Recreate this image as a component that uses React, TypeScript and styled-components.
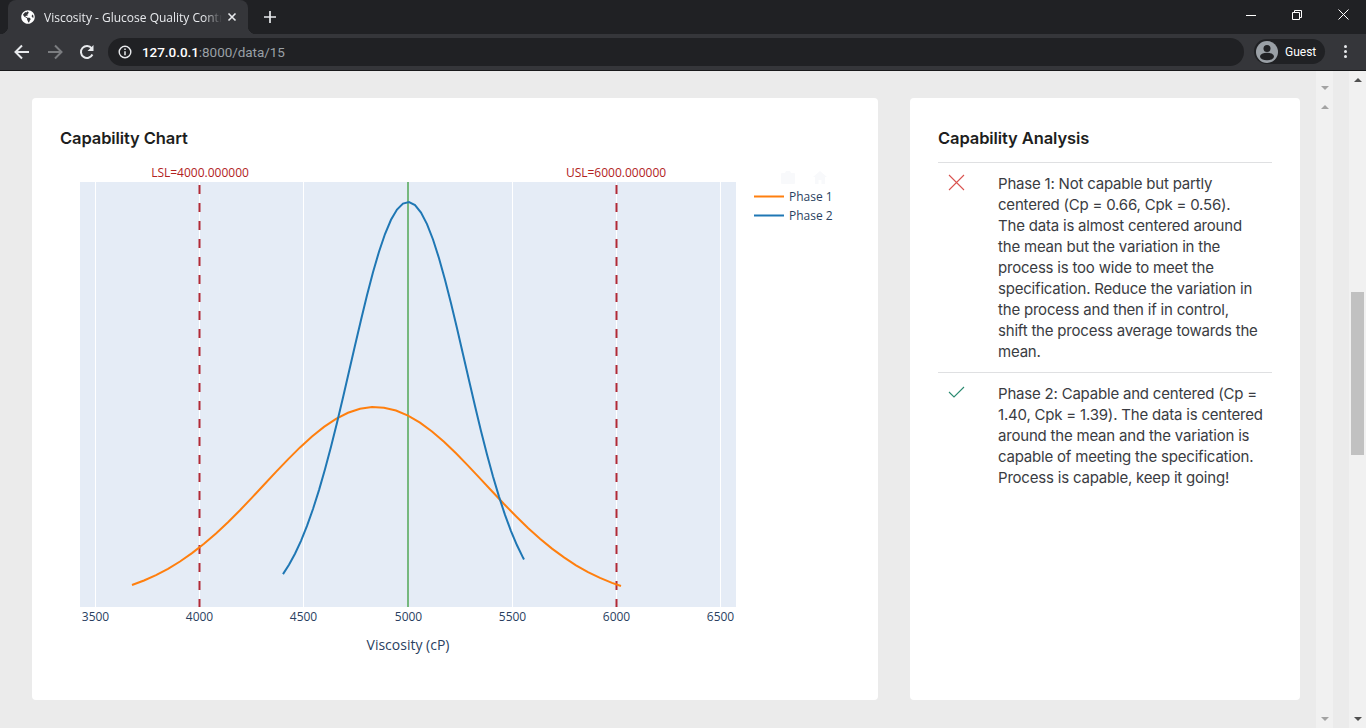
import React from "react";
import styled, { createGlobalStyle } from "styled-components";
import { FaGlobeAmericas } from "react-icons/fa";

const Global = createGlobalStyle`
  html, body { margin: 0; padding: 0; height: 100%; overflow: hidden; background: #ebebeb; }
  #root { height: 728px; }
  * { box-sizing: border-box; }
`;

const Page = styled.div`
  width: 1366px; height: 728px; display: flex; flex-direction: column; overflow: hidden;
  font-family: "Inter", "Liberation Sans", sans-serif;
`;
const TabBar = styled.div`
  height: 34px; background: #202124; display: flex; align-items: flex-end; padding-left: 8px; flex: none;
`;
const Tab = styled.div`
  position: relative; width: 240px; height: 34px; background: #35363a; border-radius: 8px 8px 0 0;
  display: flex; align-items: center; padding: 0 11px 0 13px; color: #fff;
  &::before, &::after { content: ""; position: absolute; bottom: 0; width: 8px; height: 8px; }
  &::before { left: -8px; background: radial-gradient(circle at 0 0, transparent 8px, #35363a 8.5px); }
  &::after { right: -8px; background: radial-gradient(circle at 100% 0, transparent 8px, #35363a 8.5px); }
`;
const TabTitle = styled.span`
  flex: 1; margin: 0 5px 0 9px; font: 12px "Open Sans", sans-serif; color: #e8eaed; white-space: nowrap; overflow: hidden;
  -webkit-mask-image: linear-gradient(90deg, #000 90%, transparent 100%);
  mask-image: linear-gradient(90deg, #000 90%, transparent 100%);
`;
const NewTab = styled.div`
  margin: 0 0 0 16px; height: 34px; display: flex; align-items: center; width: 16px;
`;
const WindowControls = styled.div`
  margin-left: auto; height: 34px; display: flex; align-self: flex-start;
`;
const WinButton = styled.div`
  width: 46px; height: 29px; display: flex; align-items: center; justify-content: center;
`;
const Toolbar = styled.div`
  height: 37px; flex: none; background: #35363a; border-bottom: 1px solid #18191b; display: flex; align-items: center;
  padding: 0 0 1px 0;
`;
const NavButton = styled.div`
  width: 32px; height: 28px; display: flex; align-items: center; justify-content: center; flex: none;
`;
const NavGroup = styled.div`
  display: flex; padding-left: 6px; gap: 0.5px; width: 108px; flex: none;
`;
const Omnibox = styled.div`
  width: 1136px; height: 28px; background: #202124; border-radius: 14px; display: flex; align-items: center;
  padding-left: 10px; flex: none;
`;
const Url = styled.div`
  margin-left: 10px; font: 13.5px "Roboto", sans-serif; color: #9aa0a6; letter-spacing: -0.05px;
`;
const Host = styled.span` color: #fff; font-weight: 500; `;
const Profile = styled.div`
  margin-left: 10px; width: 71px; height: 25px; background: #202124; border-radius: 13px; display: flex; align-items: center;
  padding-left: 1px; flex: none;
`;
const ProfileName = styled.span`
  margin-left: 6px; font: 12px "Roboto", sans-serif; color: #fff;
`;
const Kebab = styled.div`
  margin-left: 12px; display: flex; flex-direction: column; gap: 2px; width: 16px; align-items: center;
`;
const Dot = styled.i` width: 3px; height: 3px; border-radius: 50%; background: #e8eaed; display: block; `;
const Viewport = styled.div`
  flex: 1; display: flex; min-height: 0; background: #ebebeb;
`;
const Content = styled.main`
  width: 1316px; flex: none; padding: 27px 16px 0 32px; display: flex; gap: 32px; align-items: flex-start;
`;
const Card = styled.section<{ $w: number }>`
  width: ${(p) => p.$w}px; height: 602px; flex: none; background: #fff; border-radius: 4px; padding: 28px 28px 0;
`;
const Heading = styled.h2`
  margin: 0; font: 600 16.5px/24px "Inter", sans-serif; color: #1d1e20; letter-spacing: -0.1px;
`;
const ChartSvg = styled.svg`
  display: block; width: 790px; height: 500px; overflow: visible;
`;
const Tick = styled.text`
  font: 12px "Open Sans", sans-serif; fill: #2a3f5f; text-anchor: middle;
`;
const AxisTitle = styled.text`
  font: 14px "Open Sans", sans-serif; fill: #2a3f5f; text-anchor: middle;
`;
const Annot = styled.text`
  font: 12px "Open Sans", sans-serif; fill: #b22222; text-anchor: middle;
`;
const LegendText = styled.text`
  font: 12px "Open Sans", sans-serif; fill: #2a3f5f;
`;
const AnalysisList = styled.ul`
  list-style: none; margin: 12px 0 0; padding: 0;
`;
const AnalysisItem = styled.li`
  border-top: 1px solid #dfe0e2; padding: 10px 0; display: flex;
`;
const StatusIcon = styled.div`
  width: 60px; flex: none; padding: 1px 0 0 10px; height: 20px;
`;
const AnalysisText = styled.p`
  margin: 0; font: 400 15px/21px "Inter", sans-serif; color: #3a3c42; letter-spacing: -0.2px; flex: 1;
`;
const TextLine = styled.span`
  display: block; white-space: nowrap;
`;
const Rails = styled.div`
  flex: 1; display: flex; justify-content: space-between; position: relative;
`;
const Track = styled.div`
  width: 17px; height: 100%; background: #f1f1f1; position: relative;
`;
const Thumb = styled.div`
  position: absolute; left: 2px; right: 2px; top: 221px; height: 163px; background: #c1c1c1;
`;
const Arrow = styled.div<{ $up?: boolean; $top?: number; $bottom?: number; $c: string }>`
  position: absolute; left: 4.5px; width: 0; height: 0;
  border-left: 4px solid transparent; border-right: 4px solid transparent;
  ${(p) => (p.$up ? `border-bottom: 4px solid ${p.$c};` : `border-top: 4px solid ${p.$c};`)}
  ${(p) => (p.$top !== undefined ? `top: ${p.$top}px;` : "")}
  ${(p) => (p.$bottom !== undefined ? `bottom: ${p.$bottom}px;` : "")}
`;

const gauss = (c: number, s: number, h: number, b: number, x0: number, x1: number, step: number) => {
  const pts: string[] = [];
  const y = (x: number) => {
    const t = (x - c) / s;
    return (b - h * Math.exp(-t * t / 2)).toFixed(1);
  };
  for (let x = x0; x < x1; x += step) pts.push(`${x.toFixed(1)},${y(x)}`);
  pts.push(`${x1.toFixed(1)},${y(x1)}`);
  return pts.join(" ");
};

const ox = 60, oy = 150;
const ticks = [
  [95.5, "3500"], [199.5, "4000"], [303.5, "4500"], [408.5, "5000"], [512.5, "5500"], [616.5, "6000"], [720.5, "6500"],
] as const;

const phase1 = [
  "Phase 1: Not capable but partly",
  "centered (Cp = 0.66, Cpk = 0.56).",
  "The data is almost centered around",
  "the mean but the variation in the",
  "process is too wide to meet the",
  "specification. Reduce the variation in",
  "the process and then if in control,",
  "shift the process average towards the",
  "mean.",
];
const phase2 = [
  "Phase 2: Capable and centered (Cp =",
  "1.40, Cpk = 1.39). The data is centered",
  "around the mean and the variation is",
  "capable of meeting the specification.",
  "Process is capable, keep it going!",
];

export default function App() {
  return (
    <Page>
      <Global />
      <TabBar>
        <Tab>
          <FaGlobeAmericas size={14} color="#fff" />
          <TabTitle>Viscosity - Glucose Quality Control</TabTitle>
          <svg width="10" height="10" viewBox="0 0 10 10"><path d="M1.5 1.5l7 7M8.5 1.5l-7 7" stroke="#e8eaed" strokeWidth="1.6" /></svg>
        </Tab>
        <NewTab>
          <svg width="12" height="12" viewBox="0 0 12 12"><path d="M6 0v12M0 6h12" stroke="#e8eaed" strokeWidth="1.7" /></svg>
        </NewTab>
        <WindowControls>
          <WinButton><svg width="10" height="10" viewBox="0 0 10 10"><path d="M0 5.5h10" stroke="#fff" /></svg></WinButton>
          <WinButton><svg width="10" height="10" viewBox="0 0 10 10"><path d="M.5 2.5h7v7h-7zM2.5 2.5v-2h7v7h-2" fill="none" stroke="#fff" /></svg></WinButton>
          <WinButton><svg width="11" height="11" viewBox="0 0 11 11"><path d="M.5.5l10 10M10.5.5l-10 10" stroke="#fff" /></svg></WinButton>
        </WindowControls>
      </TabBar>
      <Toolbar>
        <NavGroup>
          <NavButton><svg width="16" height="16" viewBox="0 0 16 16"><path d="M15 8H2M8 1.500L1.500 8 8 14.500" fill="none" stroke="#e8eaed" strokeWidth="2" /></svg></NavButton>
          <NavButton><svg width="16" height="16" viewBox="0 0 16 16"><path d="M1 8h13M8 1.500L14.500 8 8 14.500" fill="none" stroke="#7b7d80" strokeWidth="2" /></svg></NavButton>
          <NavButton><svg width="16" height="16" viewBox="0 0 16 16"><path d="M13.400 10.500A6 6 0 1 1 12.700 4.300" fill="none" stroke="#e8eaed" strokeWidth="2" /><path d="M14.500 1v6h-6z" fill="#e8eaed" /></svg></NavButton>
        </NavGroup>
        <Omnibox>
          <svg width="14" height="14" viewBox="0 0 14 14"><circle cx="7" cy="7" r="5.800" fill="none" stroke="#e8eaed" strokeWidth="1.400" /><path d="M7 6.200v4M7 3.600v1.500" stroke="#e8eaed" strokeWidth="1.500" /></svg>
          <Url><Host>127.0.0.1</Host>:8000/data/15</Url>
        </Omnibox>
        <Profile>
          <svg width="24" height="24" viewBox="0 0 24 24"><circle cx="12" cy="12" r="11" fill="#9aa0a6" /><circle cx="12" cy="8.500" r="3.500" fill="#202124" /><ellipse cx="12" cy="16.500" rx="7" ry="3.800" fill="#202124" /></svg>
          <ProfileName>Guest</ProfileName>
        </Profile>
        <Kebab><Dot /><Dot /><Dot /></Kebab>
      </Toolbar>
      <Viewport>
        <Content>
          <Card $w={846}>
            <Heading>Capability Chart</Heading>
            <ChartSvg viewBox={`${ox} ${oy} 790 500`}>
              <rect x={80} y={182} width={656} height={425} fill="#e5ecf6" />
              {ticks.map(([x]) => <line key={x} x1={x} x2={x} y1={182} y2={607} stroke="#fff" strokeWidth={1} />)}
              <line x1={408} x2={408} y1={182} y2={607} stroke="#76b87e" strokeWidth={2} />
              <line x1={199.500} x2={199.500} y1={185} y2={607} stroke="#b22a36" strokeWidth={2} strokeDasharray="9 9" />
              <line x1={616.500} x2={616.500} y1={185} y2={607} stroke="#b22a36" strokeWidth={2} strokeDasharray="9 9" />
              <polyline points={gauss(375, 110, 195, 602, 132, 621, 12)} fill="none" stroke="#ff7f0e" strokeWidth={2} />
              <polyline points={gauss(408, 57, 409, 611, 283, 524, 6)} fill="none" stroke="#1f77b4" strokeWidth={2} />
              {ticks.map(([x, l]) => <Tick key={l} x={x} y={621}>{l}</Tick>)}
              <AxisTitle x={408} y={650}>Viscosity (cP)</AxisTitle>
              <Annot x={200} y={177}>LSL=4000.000000</Annot>
              <Annot x={616} y={177}>USL=6000.000000</Annot>
              <line x1={754} x2={784} y1={196.500} y2={196.500} stroke="#ff7f0e" strokeWidth={2} />
              <line x1={754} x2={784} y1={215.500} y2={215.500} stroke="#1f77b4" strokeWidth={2} />
              <LegendText x={789} y={201}>Phase 1</LegendText>
              <LegendText x={789} y={220}>Phase 2</LegendText>
              <g fill="#f8f9fb">
                <path d="M782 173h3l1-2h4l1 2h3a1 1 0 0 1 1 1v9a1 1 0 0 1-1 1h-12a1 1 0 0 1-1-1v-9a1 1 0 0 1 1-1z" />
                <path d="M820 171l7 6h-2v7h-3.500v-4h-3v4H815v-7h-2z" />
              </g>
            </ChartSvg>
          </Card>
          <Card $w={390}>
            <Heading>Capability Analysis</Heading>
            <AnalysisList>
              <AnalysisItem>
                <StatusIcon>
                  <svg width="17" height="17" viewBox="0 0 17 17"><path d="M1 1l15 15M16 1L1 16" stroke="#d9534f" strokeWidth="1.100" fill="none" /></svg>
                </StatusIcon>
                <AnalysisText>{phase1.map((l) => <TextLine key={l}>{l}</TextLine>)}</AnalysisText>
              </AnalysisItem>
              <AnalysisItem>
                <StatusIcon>
                  <svg width="17" height="17" viewBox="0 0 17 17"><path d="M1 8l5 5L16 3" stroke="#2a8a70" strokeWidth="1.100" fill="none" /></svg>
                </StatusIcon>
                <AnalysisText>{phase2.map((l) => <TextLine key={l}>{l}</TextLine>)}</AnalysisText>
              </AnalysisItem>
            </AnalysisList>
          </Card>
        </Content>
        <Rails>
          <Track>
            <Arrow $c="#a3a3a3" $top={15} />
            <Arrow $c="#a3a3a3" $up $top={34} />
            <Arrow $c="#a3a3a3" $bottom={7} />
          </Track>
          <Track>
            <Arrow $c="#505050" $up $top={7} />
            <Thumb />
            <Arrow $c="#505050" $bottom={7} />
          </Track>
        </Rails>
      </Viewport>
    </Page>
  );
}
